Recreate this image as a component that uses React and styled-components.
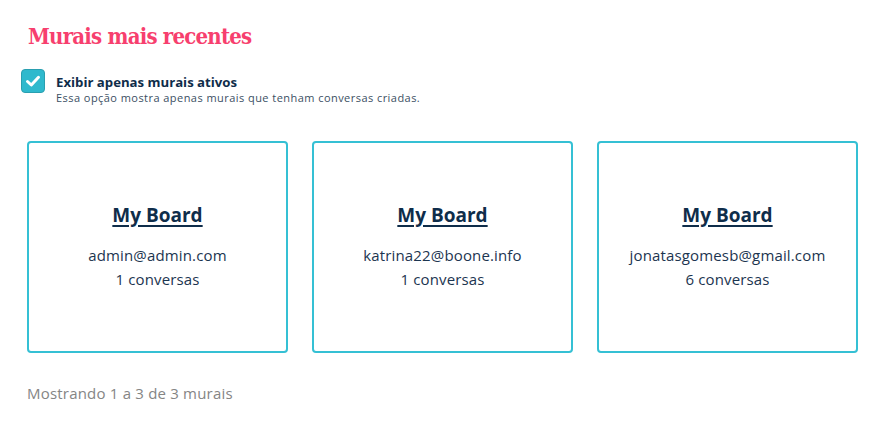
import styled, { createGlobalStyle } from 'styled-components';

const GlobalStyle = createGlobalStyle`
    body {
        margin: 0;
        background: #ffffff;
        font-family: "Open Sans", "Lato", sans-serif;
    }
`;

const Page = styled.div`
    padding: 20px 33px 20px 27px;
`;

const Title = styled.h2`
    margin: 0 0 0 1px;
    font-family: "DejaVu Serif", "Liberation Serif", serif;
    font-stretch: condensed;
    font-size: 22px;
    font-weight: bold;
    letter-spacing: -0.8px;
    color: #f73f6e;
    line-height: 32px;
`;

const Filter = styled.label`
    display: flex;
    align-items: flex-start;
    gap: 11px;
    margin: 17px 0 0 -6px;
    cursor: pointer;
`;

const Box = styled.span`
    width: 22px;
    height: 22px;
    border-radius: 4px;
    background: #2fb9cd;
    border: 1px solid #2a9fb0;
    display: flex;
    align-items: center;
    justify-content: center;
    flex-shrink: 0;
`;

const FilterText = styled.div`
    display: flex;
    flex-direction: column;
    padding-top: 5px;
`;

const FilterLabel = styled.span`
    font-size: 13.2px;
    font-weight: bold;
    color: #0f2d4a;
    line-height: 17px;
`;

const FilterHint = styled.span`
    font-size: 11px;
    letter-spacing: 0.45px;
    color: #3b4f63;
    line-height: 13px;
`;

const Grid = styled.div`
    display: grid;
    grid-template-columns: repeat(3, 1fr);
    gap: 24px;
    margin-top: 37px;
`;

const Card = styled.div`
    height: 212px;
    box-sizing: border-box;
    border: 2px solid #35c0d4;
    border-radius: 4px;
    display: flex;
    flex-direction: column;
    align-items: center;
    justify-content: center;
    color: #0f2d4a;
    padding-bottom: 2px;
`;

const BoardName = styled.a`
    font-size: 19px;
    font-weight: bold;
    color: #0f2d4a;
    text-decoration: underline;
    text-decoration-thickness: 2px;
    text-underline-offset: 3px;
    margin-bottom: 15px;
`;

const Line = styled.div`
    font-size: 15px;
    letter-spacing: 0.15px;
    line-height: 24px;
    color: #1c3550;
`;

const Footer = styled.p`
    margin: 30px 0 0;
    font-size: 15px;
    letter-spacing: 0.2px;
    color: #858585;
`;

const boards = [
    { name: "My Board", owner: "admin@admin.com", count: 1 },
    { name: "My Board", owner: "katrina22@boone.info", count: 1 },
    { name: "My Board", owner: "jonatasgomesb@gmail.com", count: 6 },
];

const App = () => {
    return (
        <Page>
            <GlobalStyle />
            <Title>Murais mais recentes</Title>
            <Filter>
                <Box>
                    <svg width="16" height="16" viewBox="0 0 16 16">
                        <path d="M2.5 8.5 L6.3 12 L13.5 4.3" fill="none" stroke="#ffffff" strokeWidth="3" strokeLinecap="round" strokeLinejoin="round" />
                    </svg>
                </Box>
                <FilterText>
                    <FilterLabel>Exibir apenas murais ativos</FilterLabel>
                    <FilterHint>Essa opção mostra apenas murais que tenham conversas criadas.</FilterHint>
                </FilterText>
            </Filter>
            <Grid>
                {boards.map((board, i) => (
                    <Card key={i}>
                        <BoardName href="#">{board.name}</BoardName>
                        <Line>{board.owner}</Line>
                        <Line>{board.count} conversas</Line>
                    </Card>
                ))}
            </Grid>
            <Footer>Mostrando 1 a 3 de 3 murais</Footer>
        </Page>
    );
};

export default App;
